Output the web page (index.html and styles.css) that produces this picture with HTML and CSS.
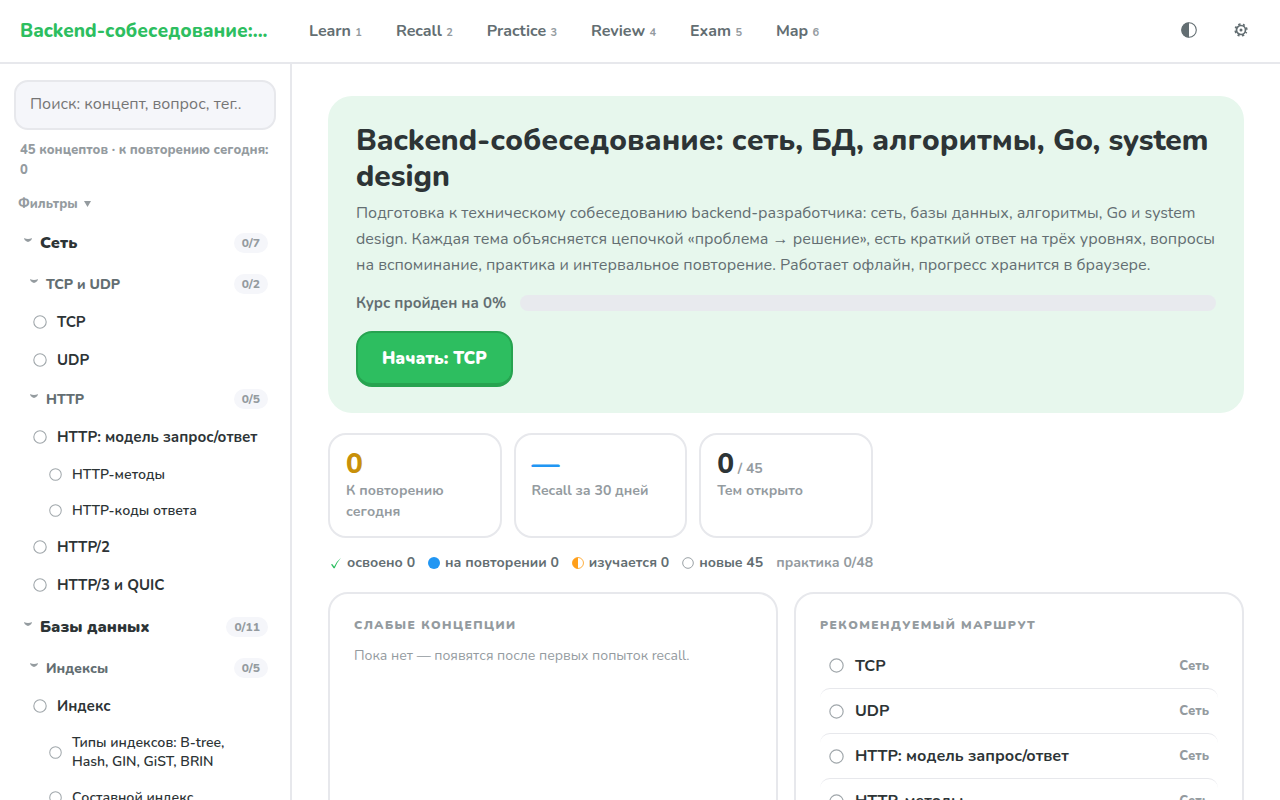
FILE: index.html
```html
<!DOCTYPE html>
<html lang="ru">
<head>
<meta charset="utf-8">
<meta name="viewport" content="width=device-width, initial-scale=1">
<title>Backend-собеседование</title>
<link rel="stylesheet" href="styles.css">
</head>
<body>
<svg class="defs" aria-hidden="true">
  <symbol id="ring" viewBox="0 0 14 14"><circle cx="7" cy="7" r="6.200" fill="none" stroke="currentColor" stroke-width="1.100"/></symbol>
  <symbol id="chevron" viewBox="0 0 8 4"><path d="M0 0Q2 1 4 1Q6 1 8 0Q7.700 2.700 5.700 3.200L4 4L2.300 3.200Q.3 2.700 0 0Z" fill="currentColor"/></symbol>
  <symbol id="half" viewBox="0 0 16 16"><circle cx="8" cy="8" r="7.300" fill="none" stroke="currentColor" stroke-width="1.100"/><path d="M8 .5A7.500 7.500 0 0 0 8 15.500Z" fill="currentColor"/></symbol>
</svg>
<header class="topbar">
  <a class="brand" href="#home">Backend-собеседование:...</a>
  <nav class="modes">
    <a href="#learn">Learn <small>1</small></a>
    <a href="#recall">Recall <small>2</small></a>
    <a href="#practice">Practice <small>3</small></a>
    <a href="#review">Review <small>4</small></a>
    <a href="#exam">Exam <small>5</small></a>
    <a href="#map">Map <small>6</small></a>
  </nav>
  <div class="tools">
    <button type="button" aria-label="Тема"><svg width="16" height="16"><use href="#half"/></svg></button>
    <button type="button" aria-label="Настройки"><svg width="14" height="14" viewBox="0 0 14 14"><circle cx="7" cy="7" r="4.500" fill="none" stroke="currentColor" stroke-width="1.700"/><circle cx="7" cy="7" r="5.700" fill="none" stroke="currentColor" stroke-width="1.900" stroke-dasharray="2.200 2.277" stroke-dashoffset="1.100" transform="rotate(22.500 7 7)"/><circle cx="7" cy="7" r="1.500" fill="currentColor"/></svg></button>
  </div>
</header>
<div class="shell">
  <aside class="sidebar">
    <input class="search" type="search" aria-label="Поиск" placeholder="Поиск: концепт, вопрос, тег..">
    <p class="summary">45 концептов · к повторению сегодня: 0</p>
    <button class="filters" type="button">Фильтры <svg width="7" height="6" viewBox="0 0 7 6"><path d="M0 0H7L3.500 6Z" fill="currentColor"/></svg></button>
    <nav class="tree">
      <button class="section" type="button"><svg class="chev"><use href="#chevron"/></svg><span>Сеть</span><span class="count">0/7</span></button>
      <button class="group" type="button"><svg class="chev"><use href="#chevron"/></svg><span>TCP и UDP</span><span class="count">0/2</span></button>
      <a class="topic" href="#tcp"><svg class="ring"><use href="#ring"/></svg><span>TCP</span></a>
      <a class="topic" href="#udp"><svg class="ring"><use href="#ring"/></svg><span>UDP</span></a>
      <button class="group" type="button"><svg class="chev"><use href="#chevron"/></svg><span>HTTP</span><span class="count">0/5</span></button>
      <a class="topic" href="#http"><svg class="ring"><use href="#ring"/></svg><span>HTTP: модель запрос/ответ</span></a>
      <a class="topic sub" href="#methods"><svg class="ring"><use href="#ring"/></svg><span>HTTP-методы</span></a>
      <a class="topic sub" href="#codes"><svg class="ring"><use href="#ring"/></svg><span>HTTP-коды ответа</span></a>
      <a class="topic" href="#http2"><svg class="ring"><use href="#ring"/></svg><span>HTTP/2</span></a>
      <a class="topic" href="#http3"><svg class="ring"><use href="#ring"/></svg><span>HTTP/3 и QUIC</span></a>
      <button class="section" type="button"><svg class="chev"><use href="#chevron"/></svg><span>Базы данных</span><span class="count">0/11</span></button>
      <button class="group" type="button"><svg class="chev"><use href="#chevron"/></svg><span>Индексы</span><span class="count">0/5</span></button>
      <a class="topic" href="#index"><svg class="ring"><use href="#ring"/></svg><span>Индекс</span></a>
      <a class="topic sub" href="#types"><svg class="ring"><use href="#ring"/></svg><span>Типы индексов: B-tree, Hash, GIN, GiST, BRIN</span></a>
      <a class="topic sub" href="#composite"><svg class="ring"><use href="#ring"/></svg><span>Составной индекс</span></a>
    </nav>
  </aside>
  <main class="content">
    <section class="hero">
      <h1>Backend-собеседование: сеть, БД, алгоритмы, Go, system design</h1>
      <p>Подготовка к техническому собеседованию backend-разработчика: сеть, базы данных, алгоритмы, Go и system design. Каждая тема объясняется цепочкой «проблема → решение», есть краткий ответ на трёх уровнях, вопросы на вспоминание, практика и интервальное повторение. Работает офлайн, прогресс хранится в браузере.</p>
      <div class="course"><span>Курс пройден на 0%</span><div class="bar"></div></div>
      <button class="start" type="button">Начать: TCP</button>
    </section>
    <section class="stats">
      <div class="stat"><div class="value due">0</div><div class="label">К повторению сегодня</div></div>
      <div class="stat"><div class="value rate">—</div><div class="label">Recall за 30 дней</div></div>
      <div class="stat"><div class="value">0<small> / 45</small></div><div class="label">Тем открыто</div></div>
    </section>
    <div class="legend">
      <span><svg width="12" height="12" viewBox="0 0 12 12"><path d="M1 7.500L2.200 7L4.200 9.500Q7 4 11 .8Q7 5.500 4.700 11.200H3.600Z" fill="#2dbe60"/></svg>освоено 0</span>
      <span><svg width="12" height="12" viewBox="0 0 12 12"><circle cx="6" cy="6" r="6" fill="#2196f3"/></svg>на повторении 0</span>
      <span><svg class="learning" width="12" height="12"><use href="#half"/></svg>изучается 0</span>
      <span><svg class="new" width="12" height="12"><use href="#ring"/></svg>новые 45</span>
      <span class="practice">практика 0/48</span>
    </div>
    <div class="panels">
      <section class="panel">
        <h2>Слабые концепции</h2>
        <p>Пока нет — появятся после первых попыток recall.</p>
      </section>
      <section class="panel">
        <h2>Рекомендуемый маршрут</h2>
        <div class="route">
          <a href="#tcp"><svg class="ring"><use href="#ring"/></svg><span>TCP</span><small>Сеть</small></a>
          <a href="#udp"><svg class="ring"><use href="#ring"/></svg><span>UDP</span><small>Сеть</small></a>
          <a href="#http"><svg class="ring"><use href="#ring"/></svg><span>HTTP: модель запрос/ответ</span><small>Сеть</small></a>
          <a href="#methods"><svg class="ring"><use href="#ring"/></svg><span>HTTP-методы</span><small>Сеть</small></a>
        </div>
      </section>
    </div>
  </main>
</div>
</body>
</html>
```

FILE: styles.css
```css
* { box-sizing: border-box; }
html, body { height: 100%; }
body {
  margin: 0;
  display: flex;
  flex-direction: column;
  overflow: hidden;
  background: #fff;
  color: #2d3436;
  font-family: Nunito, "Noto Sans", sans-serif;
  font-size: 16px;
}
a { color: inherit; text-decoration: none; }
button { font: inherit; color: inherit; background: none; border: 0; padding: 0; cursor: pointer; }
h1, h2, p { margin: 0; }
svg { flex: none; }
.defs { position: absolute; width: 0; height: 0; }

.topbar {
  flex: none;
  display: flex;
  align-items: center;
  height: 64px;
  padding: 0 20px;
  border-bottom: 2px solid #e7e8ec;
}
.brand { width: 249px; color: #2dbe60; font-size: 19px; font-weight: 800; white-space: nowrap; }
.modes { display: flex; gap: 34px; margin-left: 40px; color: #636e72; font-size: 16px; font-weight: 700; white-space: nowrap; }
.modes small { color: #949b9f; font-size: 11px; }
.tools { display: flex; margin-left: auto; padding-bottom: 2px; color: #636e72; }
.tools button { display: grid; place-items: center; width: 38px; height: 38px; }
.tools button + button { margin-left: 14px; }

.shell { flex: 1; min-height: 0; display: flex; }
.sidebar { flex: none; width: 292px; padding: 16px 14px; border-right: 2px solid #e7e8ec; overflow: hidden; }
.search {
  display: block;
  width: 100%;
  height: 50px;
  padding: 0 14px 2px;
  border: 2px solid #e7e8ec;
  border-radius: 14px;
  background: #f5f6fa;
  font: inherit;
}
.search::placeholder { color: #757575; }
.summary { margin: 10px 0 0; padding: 0 0 0 6px; color: #949b9f; font-size: 13px; font-weight: 800; line-height: 20px; }
.filters { display: flex; align-items: center; gap: 6px; margin: 14px 0 0 4px; color: #949b9f; font-size: 13px; font-weight: 800; line-height: 20px; }
.tree { display: flex; flex-direction: column; margin-top: 9px; }
.section, .group, .topic { display: flex; align-items: center; text-align: left; }
.section { height: 40px; margin-bottom: 2px; padding: 0 8px 0 10px; gap: 8px; font-weight: 900; }
.topic + .section { margin-top: 3px; }
.group { height: 38px; padding: 0 8px 0 16px; gap: 8px; color: #636e72; font-size: 14px; font-weight: 800; }
.topic + .group { margin-top: 1px; }
.chev { width: 8px; height: 4px; margin-bottom: 6px; color: #949b9f; }
.count { margin-left: auto; padding: 0 8px; border-radius: 10px; background: #f5f6fa; color: #949b9f; font-size: 12px; font-weight: 800; line-height: 20px; }
.topic { min-height: 38px; padding: 8px 4px 8px 19px; gap: 10px; font-size: 15px; font-weight: 700; line-height: 21px; }
.sub { min-height: 36px; padding-right: 12px; padding-left: 35px; font-size: 14px; font-weight: 600; line-height: 19px; }
.ring { width: 14px; height: 14px; color: #a0a7ab; }
.sub .ring { width: 13px; height: 13px; }

.content { flex: 1; min-width: 0; padding: 32px 36px; overflow: hidden; }
.hero { padding: 27px 28px 26px; border-radius: 24px; background: #e7f7ed; }
.hero h1 { font-size: 30px; font-weight: 800; line-height: 36px; }
.hero p { margin-top: 5px; color: #636e72; font-size: 16px; line-height: 26px; }
.course { display: flex; align-items: center; gap: 14px; margin-top: 14px; color: #636e72; font-size: 15px; font-weight: 700; line-height: 22px; }
.bar { flex: 1; height: 16px; border-radius: 8px; background: #e8eaee; }
.start {
  display: block;
  margin-top: 17px;
  height: 56px;
  padding: 0 24px;
  border: 2px solid #27a350;
  border-bottom-width: 4px;
  border-radius: 16px;
  background: #2dbe60;
  color: #fff;
  font-size: 17px;
  font-weight: 900;
}
.stats { display: grid; grid-template-columns: repeat(5, 1fr); gap: 12px; margin-top: 20px; }
.stat { padding: 14px 16px; border: 2px solid #e7e8ec; border-radius: 18px; }
.value { height: 31px; font-size: 28px; font-weight: 800; line-height: 30px; white-space: nowrap; }
.value small { color: #949b9f; font-size: 14px; font-weight: 700; }
.due { color: #c8900a; }
.rate { color: #2196f3; }
.label { color: #949b9f; font-size: 14px; font-weight: 700; line-height: 21px; }
.legend { display: flex; gap: 13px; margin: 14px 0 18px; padding-left: 2px; color: #636e72; font-size: 14px; font-weight: 700; line-height: 22px; white-space: nowrap; }
.legend span { display: flex; align-items: center; gap: 5px; }
.legend .practice, .new { color: #949b9f; }
.learning { color: #ff9f1a; }
.panels { display: grid; grid-template-columns: 1fr 1fr; gap: 16px; }
.panel { padding: 22px 24px; border: 2px solid #e7e8ec; border-radius: 20px; }
.panel h2 { color: #949b9f; font-size: 12px; font-weight: 900; line-height: 18px; letter-spacing: 0.12em; text-transform: uppercase; }
.panel p { margin-top: 10px; color: #949b9f; font-size: 14px; line-height: 24px; }
.route { margin-top: 9px; }
.route a { display: flex; align-items: center; min-height: 45px; padding: 0 9px; gap: 11px; border-radius: 10px; font-weight: 700; }
.route a + a { border-top: 1px solid #e7e8ec; }
.route .ring { width: 15px; height: 15px; }
.route small { margin-left: auto; color: #949b9f; font-size: 13px; font-weight: 800; }
```
